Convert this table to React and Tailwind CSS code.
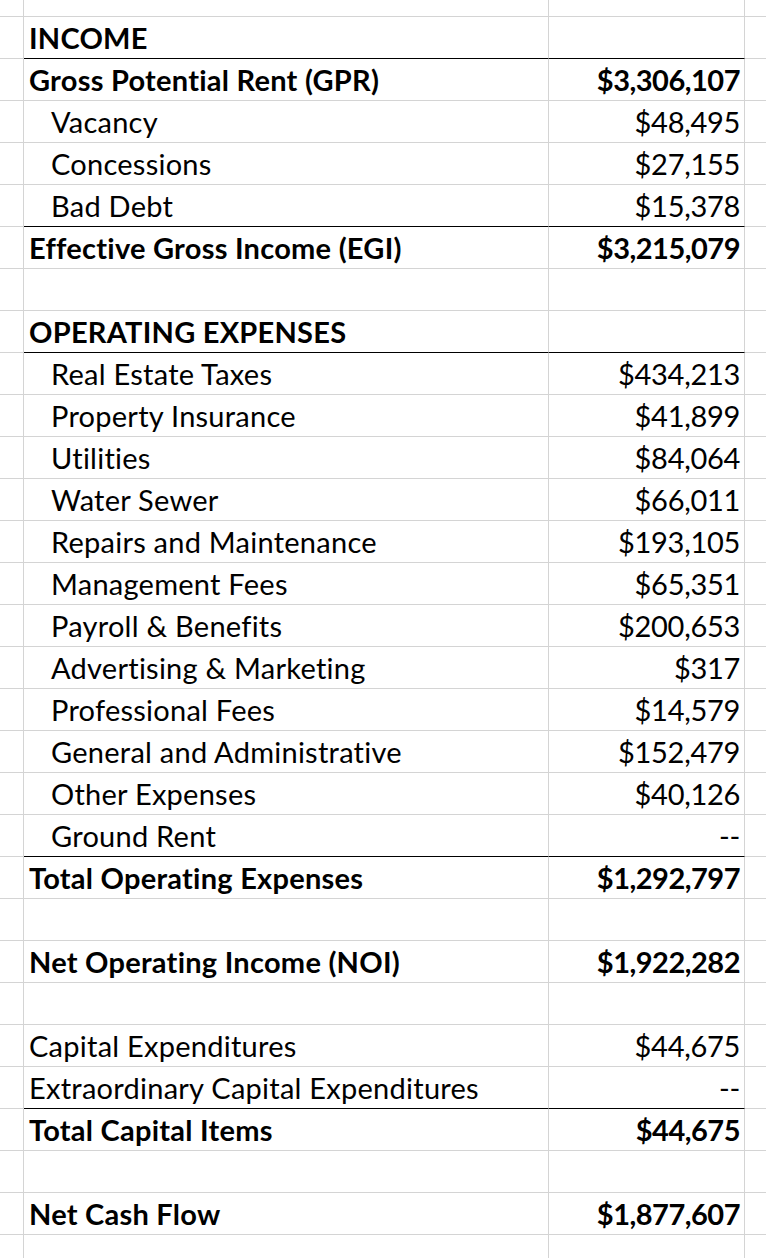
const rows = [
  { label: 'INCOME', bold: true, line: true },
  { label: 'Gross Potential Rent (GPR)', value: '$3,306,107', bold: true },
  { label: 'Vacancy', value: '$48,495', indent: true },
  { label: 'Concessions', value: '$27,155', indent: true },
  { label: 'Bad Debt', value: '$15,378', indent: true, line: true },
  { label: 'Effective Gross Income (EGI)', value: '$3,215,079', bold: true },
  {},
  { label: 'OPERATING EXPENSES', bold: true, line: true },
  { label: 'Real Estate Taxes', value: '$434,213', indent: true },
  { label: 'Property Insurance', value: '$41,899', indent: true },
  { label: 'Utilities', value: '$84,064', indent: true },
  { label: 'Water Sewer', value: '$66,011', indent: true },
  { label: 'Repairs and Maintenance', value: '$193,105', indent: true },
  { label: 'Management Fees', value: '$65,351', indent: true },
  { label: 'Payroll & Benefits', value: '$200,653', indent: true },
  { label: 'Advertising & Marketing', value: '$317', indent: true },
  { label: 'Professional Fees', value: '$14,579', indent: true },
  { label: 'General and Administrative', value: '$152,479', indent: true },
  { label: 'Other Expenses', value: '$40,126', indent: true },
  { label: 'Ground Rent', value: '--', indent: true, line: true },
  { label: 'Total Operating Expenses', value: '$1,292,797', bold: true },
  {},
  { label: 'Net Operating Income (NOI)', value: '$1,922,282', bold: true },
  {},
  { label: 'Capital Expenditures', value: '$44,675' },
  { label: 'Extraordinary Capital Expenditures', value: '--', line: true },
  { label: 'Total Capital Items', value: '$44,675', bold: true },
  {},
  { label: 'Net Cash Flow', value: '$1,877,607', bold: true },
  {},
]

function Row({ row, first }) {
  const h = first ? 'h-[17px]' : 'h-[42px]'
  const edge = row.line ? 'border-b-black' : 'border-b-[#d4d4d4]'
  const weight = row.bold ? 'font-bold' : 'font-normal'
  return (
    <div className={`flex ${h}`}>
      <div className="w-[24px] shrink-0 border-r border-b border-[#d4d4d4]"></div>
      <div className={`w-[525px] shrink-0 flex items-end border-r border-b border-[#d4d4d4] ${edge} pb-[6px] tracking-[0.25px] ${row.indent ? 'pl-[27px]' : 'pl-[5px]'} ${weight}`}>
        {row.label}
      </div>
      <div className={`w-[196px] shrink-0 flex items-end justify-end border-r border-b border-[#d4d4d4] ${edge} pb-[6px] pr-[4px] ${row.bold ? 'tracking-[-0.5px]' : 'tracking-[-0.3px]'} ${weight}`}>
        {row.value}
      </div>
      <div className="flex-1 border-b border-[#d4d4d4]"></div>
    </div>
  )
}

export default function App() {
  return (
    <div className="w-[766px] h-[1258px] overflow-hidden bg-white text-black text-[29px] leading-none font-['Lato','Noto_Sans',sans-serif] [font-variant-ligatures:none] whitespace-nowrap">
      <Row row={{}} first />
      {rows.map((row, i) => (
        <Row key={i} row={row} />
      ))}
    </div>
  )
}
